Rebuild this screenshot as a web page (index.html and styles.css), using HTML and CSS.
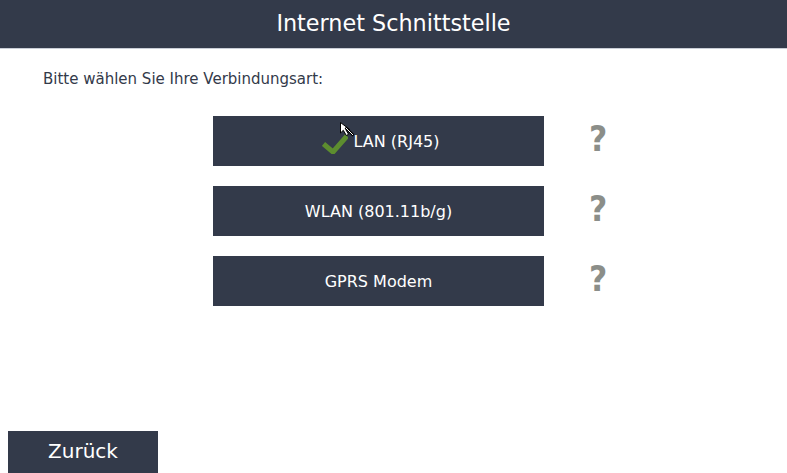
FILE: index.html
```html
<!DOCTYPE html>
<html lang="de">
<head>
<meta charset="utf-8">
<title>Internet Schnittstelle</title>
<link rel="stylesheet" href="styles.css">
</head>
<body>
<div class="screen">
  <header class="header">Internet Schnittstelle</header>
  <p class="prompt">Bitte wählen Sie Ihre Verbindungsart:</p>
  <div class="options">
    <div class="row">
      <button class="opt">
        <span class="label label-checked">
          <svg class="check" width="26" height="20" viewBox="0 0 26 20"><path d="M1.5 10 L11 18 L25 2" fill="none" stroke="#5d8d2f" stroke-width="5"/></svg>
          <span>LAN (RJ45)</span>
        </span>
        <svg class="cursor" width="15" height="15" viewBox="0 0 15 15"><path d="M0.5 0.5 L0.5 11 L3.3 8.3 L6.3 13.5 L8.6 12.3 L5.8 7.6 L9.8 7.6 Z" fill="#fff" stroke="#000" stroke-width="1"/><path d="M5.5 5.5 L13.5 13.5" stroke="#000" stroke-width="2.5"/><path d="M6 6 L13 13" stroke="#fff" stroke-width="1"/></svg>
      </button>
      <span class="help">?</span>
    </div>
    <div class="row">
      <button class="opt"><span class="label">WLAN (801.11b/g)</span></button>
      <span class="help">?</span>
    </div>
    <div class="row">
      <button class="opt"><span class="label">GPRS Modem</span></button>
      <span class="help">?</span>
    </div>
  </div>
  <button class="back">Zurück</button>
</div>
</body>
</html>
```
FILE: styles.css
```css
html, body {
  margin: 0;
  padding: 0;
  background: #fff;
}
.screen {
  width: 787px;
  height: 473px;
  position: relative;
  overflow: hidden;
  font-family: "DejaVu Sans", sans-serif;
  display: flex;
  flex-direction: column;
}
.header {
  height: 49px;
  background: #333a4a;
  border-bottom: 1px solid #c9cdd6;
  color: #fff;
  font-size: 22.3px;
  display: flex;
  align-items: center;
  justify-content: center;
  padding-bottom: 3px;
  box-sizing: border-box;
}
.prompt {
  margin: 21px 0 0 43px;
  font-size: 15px;
  color: #333a4a;
  line-height: 18px;
}
.options {
  display: flex;
  flex-direction: column;
  gap: 20px;
  margin-top: 28px;
  padding-left: 213px;
}
.row {
  display: flex;
  align-items: center;
}
.opt {
  position: relative;
  width: 331px;
  height: 50px;
  border: none;
  background: #333a4a;
  color: #fff;
  font-family: "DejaVu Sans", sans-serif;
  font-size: 16px;
  padding: 0;
  display: flex;
  align-items: center;
  justify-content: center;
}
.label {
  display: flex;
  align-items: center;
  gap: 6px;
}
.label-checked {
  padding-left: 4px;
}
.check {
  margin-top: 6px;
}
.cursor {
  position: absolute;
  left: 127px;
  top: 6px;
}
.help {
  margin-left: 45px;
  font-size: 35px;
  font-weight: bold;
  color: #8b8e89;
  font-family: "DejaVu Sans Condensed", "DejaVu Sans", sans-serif;
  line-height: 1;
  margin-top: -4px;
}
.back {
  margin: auto 0 0 8px;
  width: 150px;
  height: 42px;
  border: none;
  background: #333a4a;
  color: #fff;
  font-family: "DejaVu Sans", sans-serif;
  font-size: 20px;
  padding: 0 0 2px 0;
}
```
